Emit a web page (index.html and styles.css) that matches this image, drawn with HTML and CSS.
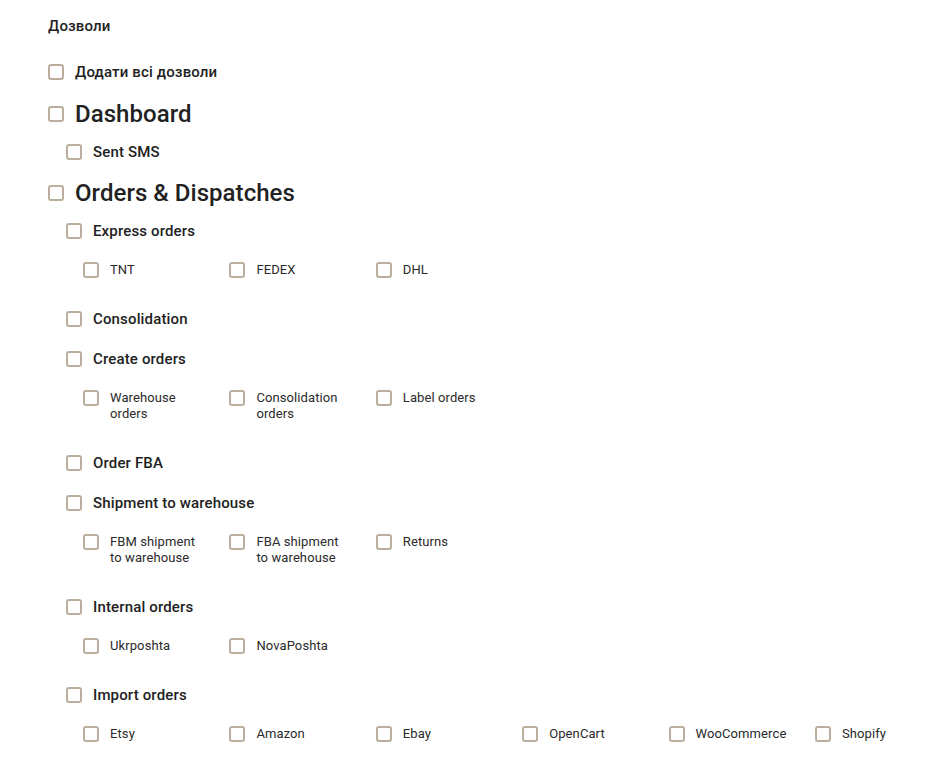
FILE: index.html
```html
<!DOCTYPE html>
<html lang="uk">
<head>
<meta charset="utf-8">
<title>Дозволи</title>
<link rel="stylesheet" href="styles.css">
</head>
<body>
<div class="perms">
  <div class="title">Дозволи</div>

  <label class="row all"><span class="cb"></span><span>Додати всі дозволи</span></label>

  <label class="row lvl1"><span class="cb"></span><span>Dashboard</span></label>
  <div class="section">
    <label class="row lvl2 last"><span class="cb"></span><span>Sent SMS</span></label>
  </div>

  <label class="row lvl1"><span class="cb"></span><span>Orders &amp; Dispatches</span></label>
  <div class="section">
    <label class="row lvl2"><span class="cb"></span><span>Express orders</span></label>
    <div class="subs">
      <label class="sub"><span class="cb"></span><span class="st">TNT</span></label>
      <label class="sub"><span class="cb"></span><span class="st">FEDEX</span></label>
      <label class="sub"><span class="cb"></span><span class="st">DHL</span></label>
    </div>

    <label class="row lvl2"><span class="cb"></span><span>Consolidation</span></label>

    <label class="row lvl2"><span class="cb"></span><span>Create orders</span></label>
    <div class="subs">
      <label class="sub"><span class="cb"></span><span class="st">Warehouse orders</span></label>
      <label class="sub"><span class="cb"></span><span class="st">Consolidation orders</span></label>
      <label class="sub"><span class="cb"></span><span class="st">Label orders</span></label>
    </div>

    <label class="row lvl2"><span class="cb"></span><span>Order FBA</span></label>

    <label class="row lvl2"><span class="cb"></span><span>Shipment to warehouse</span></label>
    <div class="subs">
      <label class="sub"><span class="cb"></span><span class="st">FBM shipment to warehouse</span></label>
      <label class="sub"><span class="cb"></span><span class="st">FBA shipment to warehouse</span></label>
      <label class="sub"><span class="cb"></span><span class="st">Returns</span></label>
    </div>

    <label class="row lvl2"><span class="cb"></span><span>Internal orders</span></label>
    <div class="subs">
      <label class="sub"><span class="cb"></span><span class="st">Ukrposhta</span></label>
      <label class="sub"><span class="cb"></span><span class="st">NovaPoshta</span></label>
    </div>

    <label class="row lvl2"><span class="cb"></span><span>Import orders</span></label>
    <div class="subs">
      <label class="sub"><span class="cb"></span><span class="st">Etsy</span></label>
      <label class="sub"><span class="cb"></span><span class="st">Amazon</span></label>
      <label class="sub"><span class="cb"></span><span class="st">Ebay</span></label>
      <label class="sub"><span class="cb"></span><span class="st">OpenCart</span></label>
      <label class="sub"><span class="cb"></span><span class="st">WooCommerce</span></label>
      <label class="sub"><span class="cb"></span><span class="st">Shopify</span></label>
    </div>
  </div>
</div>
</body>
</html>
```

FILE: styles.css
```css
* { box-sizing: border-box; }

html, body {
  margin: 0;
  padding: 0;
  background: #ffffff;
}

body {
  font-family: Roboto, "Noto Sans", "Liberation Sans", sans-serif;
  color: #222222;
}

.perms {
  display: flex;
  flex-direction: column;
  align-items: flex-start;
  padding: 16px 0 0 48px;
}

.title {
  font-size: 15px;
  font-weight: 500;
  line-height: 20px;
  letter-spacing: 0.15px;
  margin-bottom: 26px;
}

.row {
  display: flex;
  align-items: center;
  gap: 11px;
  cursor: pointer;
}

.cb {
  flex: none;
  width: 16px;
  height: 16px;
  border: 2px solid #bbae9e;
  border-radius: 3px;
  background: #fff;
}

.all {
  font-size: 15px;
  font-weight: 500;
  line-height: 20px;
  letter-spacing: 0.15px;
  margin-bottom: 16px;
}

.lvl1 {
  font-size: 24px;
  font-weight: 500;
  line-height: 32px;
  letter-spacing: 0.05px;
  margin-bottom: 12px;
}

.section {
  display: flex;
  flex-direction: column;
  align-items: flex-start;
  padding-left: 18px;
}

.lvl2 {
  font-size: 15px;
  font-weight: 500;
  line-height: 20px;
  letter-spacing: 0.15px;
  margin-bottom: 20px;
}

.lvl2.last {
  margin-bottom: 15px;
}

.subs {
  display: grid;
  grid-template-columns: repeat(6, 130px);
  column-gap: 16.4px;
  padding-left: 17px;
  margin-top: 1px;
  margin-bottom: 31px;
}

.sub {
  display: flex;
  align-items: flex-start;
  gap: 11px;
  font-size: 13px;
  font-weight: 400;
  line-height: 16px;
  letter-spacing: 0.1px;
  color: #2a2a2a;
  cursor: pointer;
}

.st {
  max-width: 97px;
}
```
